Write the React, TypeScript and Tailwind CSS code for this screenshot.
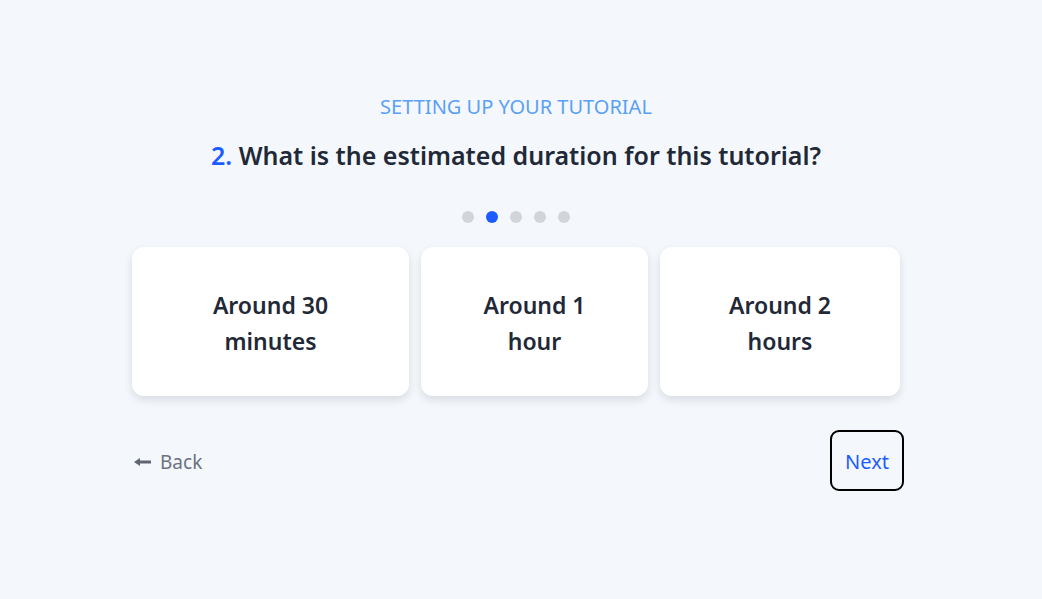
import React from "react";

const font = { fontFamily: '"Noto Sans", "Open Sans", Arial, sans-serif' };

function Card({ w, l1, l2 }: { w: string; l1: string; l2: string }) {
  return (
    <div
      className={`${w} h-[149px] shrink-0 rounded-xl bg-white shadow-[0_4px_8px_rgba(15,23,42,0.12)] flex items-center justify-center px-10 pt-[2px]`}
    >
      <div className="text-center text-[23px] leading-[36px] font-semibold text-[#1f2937]">
        {l1}
        <br />
        {l2}
      </div>
    </div>
  );
}

export default function App() {
  return (
    <div className="min-h-screen w-full bg-[#f4f8fc]" style={font}>
      <div className="flex flex-col items-center pt-[93px] pr-[10px]">
        <div className="text-[20px] leading-[28px] text-[#5aa0f7]">
          SETTING UP YOUR TUTORIAL
        </div>
        <div className="mt-[16px] text-[25px] leading-[36px] font-semibold text-[#1f2937]">
          <span className="text-[#1a5cff]">2.</span> What is the estimated duration for this tutorial?
        </div>
        <div className="mt-[38px] flex gap-[12px]">
          <span className="w-3 h-3 rounded-full bg-[#d1d5db]" />
          <span className="w-3 h-3 rounded-full bg-[#1a5cff]" />
          <span className="w-3 h-3 rounded-full bg-[#d1d5db]" />
          <span className="w-3 h-3 rounded-full bg-[#d1d5db]" />
          <span className="w-3 h-3 rounded-full bg-[#d1d5db]" />
        </div>
        <div className="mt-[24px] w-[768px] flex flex-col">
          <div className="flex gap-[12px]">
            <Card w="w-[277px]" l1="Around 30" l2="minutes" />
            <Card w="w-[227px]" l1="Around 1" l2="hour" />
            <Card w="w-[240px]" l1="Around 2" l2="hours" />
          </div>
          <div className="mt-[34px] -mr-[4px] flex items-center justify-between">
            <button className="flex items-center gap-2 pl-[2px] pt-[3px] text-[19px] text-[#6b7280]">
              <svg width="18" height="10" viewBox="0 0 18 10">
                <path d="M5 5 H17" stroke="#5f6670" strokeWidth="3" />
                <path d="M0 5 L6 1 L6 9 Z" fill="#5f6670" />
              </svg>
              Back
            </button>
            <button className="w-[74px] h-[61px] pt-[2px] rounded-[9px] border-2 border-black text-[20px] text-[#1a5cff]">
              Next
            </button>
          </div>
        </div>
      </div>
    </div>
  );
}
